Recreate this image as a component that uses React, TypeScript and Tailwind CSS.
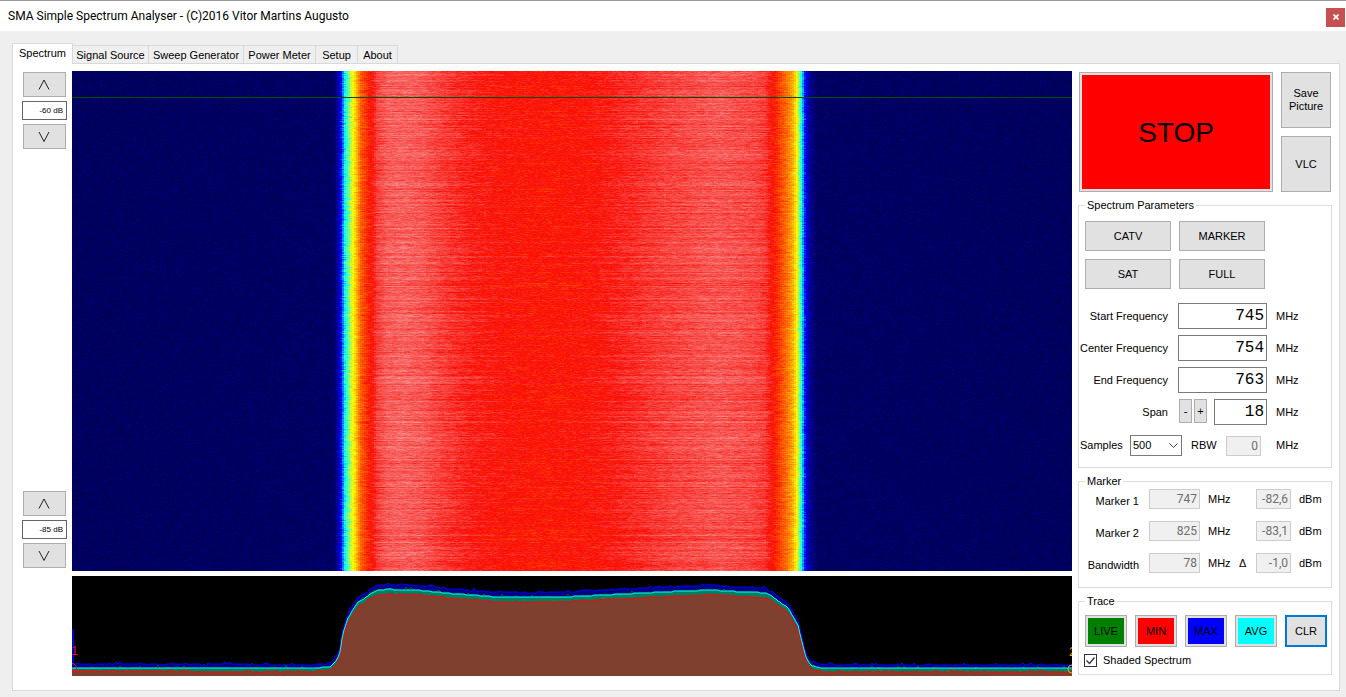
import { useLayoutEffect, useRef, type ReactNode } from 'react';

const BINS = 500;
const ROWS = 500;

type Point = [number, number];

function createRandom(seed: number) {
  let s = seed;
  return () => {
    s = (s + 0x6d2b79f5) | 0;
    let t = Math.imul(s ^ (s >>> 15), 1 | s);
    t = (t + Math.imul(t ^ (t >>> 7), 61 | t)) ^ t;
    return ((t ^ (t >>> 14)) >>> 0) / 4294967296;
  };
}

function interpolate(points: Point[], x: number) {
  for (let i = 1; i < points.length; i++) {
    if (x <= points[i][0]) {
      const [x0, y0] = points[i - 1];
      const [x1, y1] = points[i];
      return y0 + ((y1 - y0) * (x - x0)) / (x1 - x0);
    }
  }
  return points[points.length - 1][1];
}

// Signal level across the span; each whole level is one palette stop.
const LEVELS: Point[] = [
  [0, 0.5], [261, 0.55], [265, 1.2], [268, 2], [272, 3], [276, 3.5], [280, 4], [284, 4.6],
  [288, 5.3], [294, 5.7], [299, 6], [304, 6.5], [314, 6.8], [330, 6.85], [350, 6.75], [372, 6.45], [400, 6.18],
  [430, 6.03], [480, 5.95], [520, 6.04], [550, 6.25], [590, 6.5], [645, 6.75], [680, 6.6], [692, 6.45], [699, 6],
  [706, 5.6], [714, 5.1], [720, 4.6], [724, 4], [728, 3.2], [732, 2.1], [736, 1.2], [743, 0.55], [1000, 0.5],
];

const PALETTE = [
  [0, 0, 50], [0, 0, 140], [0, 0, 255], [0, 255, 255], [255, 255, 0],
  [255, 125, 0], [250, 14, 6], [246, 112, 110], [255, 210, 210],
];

function levelColor(level: number) {
  const l = Math.max(0, Math.min(PALETTE.length - 1.001, level));
  const i = Math.floor(l);
  const f = l - i;
  return PALETTE[i].map((c, k) => c + (PALETTE[i + 1][k] - c) * f);
}

function Waterfall() {
  const ref = useRef<HTMLCanvasElement>(null);
  useLayoutEffect(() => {
    const ctx = ref.current?.getContext('2d');
    if (!ctx) return;
    const random = createRandom(7);
    const image = ctx.createImageData(BINS, ROWS);
    const base = Array.from({ length: BINS }, (_, i) => interpolate(LEVELS, i * 2));
    let drift = 0;
    for (let y = 0; y < ROWS; y++) {
      drift = drift * 0.6 + (random() - 0.5) * 0.14;
      const rowShift = drift + (random() + random() - 1) * 0.26;
      let smear = 0;
      for (let x = 0; x < BINS; x++) {
        const signal = base[x] > 5.4 ? Math.max(0.4, Math.min(1, (base[x] - 5.5) * 1.6)) : base[x] > 1 ? 0.3 : 0;
        const grain = random() + random() - 1;
        smear = smear * 0.45 + grain * 0.3;
        const noise = signal ? smear * 0.9 : grain * 0.26;
        const [r, g, b] = levelColor(base[x] + noise + rowShift * signal);
        const o = (y * BINS + x) * 4;
        image.data[o] = r;
        image.data[o + 1] = g;
        image.data[o + 2] = b;
        image.data[o + 3] = 255;
      }
    }
    ctx.putImageData(image, 0, 0);
    ctx.fillStyle = '#005000';
    ctx.fillRect(0, 26, BINS, 1);
  }, []);
  return (
    <canvas
      ref={ref}
      width={BINS}
      height={ROWS}
      aria-label="Waterfall"
      className="block h-[500px] w-full [image-rendering:pixelated]"
    />
  );
}

const AVERAGE: Point[] = [
  [0, 91.5], [241, 92.3], [258, 90.7], [265, 84], [268, 75.7], [271, 57], [276, 42], [286, 25.7],
  [291, 24], [298, 18], [305, 14], [315, 13.3], [348, 14.3], [380, 17.5], [420, 20.5], [455, 21.5],
  [500, 20.5], [550, 18], [600, 15.5], [640, 14], [658, 15.3], [693, 16.7], [701, 21], [710, 28],
  [716, 31.7], [726, 49], [731, 70.7], [735, 84], [740, 90], [751, 92.3], [1000, 92.3],
];

function trace(seed: number, floorOffset: number, topOffset: number, jitter: number) {
  const random = createRandom(seed);
  const points: Point[] = [];
  for (let x = 0; x <= 1000; x += 2) {
    const y = interpolate(AVERAGE, x);
    const top = Math.max(0, Math.min(1, (92 - y) / 70));
    const offset = floorOffset + (topOffset - floorOffset) * top;
    const spike = random() > 0.7 ? (random() - 0.6) * jitter * 2 : 0;
    points.push([x, Math.round(y + offset + spike)]);
  }
  return points;
}

const toLine = (points: Point[]) => 'M' + points.map(([x, y]) => `${x} ${y}`).join('L');
const toArea = (points: Point[]) => toLine(points) + 'L1000 100L0 100Z';

const maxTrace = trace(3, -3.6, -4.8, 1.8);
const liveTrace = trace(11, 0.3, 0.3, 2.6);
const avgTrace = trace(5, 0, 0, 0);
const minTrace = trace(9, 3.6, 5, 1.3);

function SpectrumPlot() {
  return (
    <svg
      viewBox="0 0 1000 100"
      preserveAspectRatio="none"
      className="block h-[100px] w-full bg-black"
      role="img"
      aria-label="Spectrum"
    >
      <path d={toArea(maxTrace)} fill="#000080" />
      <path d={toLine(maxTrace)} fill="none" stroke="#0000ff" />
      <path d={toLine(liveTrace)} fill="none" stroke="#006400" />
      <path d={toArea(avgTrace)} fill="#008060" />
      <path d={toArea(minTrace)} fill="#804030" />
      <path d={toLine(minTrace)} fill="none" stroke="#ff0000" />
      <path d={toLine(avgTrace)} fill="none" stroke="#00ffff" />
      <path d="M1 53V90" stroke="#0000d0" strokeWidth="2" />
      <text x="-1" y="79" fill="#dc143c" fontSize="13" fontFamily="Liberation Sans, sans-serif">1</text>
      <circle cx="0" cy="92" r="4.5" fill="none" stroke="#dc143c" />
      <text x="997" y="80" fill="#ffa500" fontSize="13" fontFamily="Liberation Sans, sans-serif">2</text>
      <circle cx="1000" cy="93" r="4" fill="none" stroke="#ffa500" />
    </svg>
  );
}

const face = 'border border-[#adadad] bg-[#e1e1e1] text-center';

function Button({ className, children }: { className: string; children: ReactNode }) {
  return <button type="button" className={`${face} ${className}`}>{children}</button>;
}

function LevelControl({ name, value }: { name: string; value: string }) {
  return (
    <div className="flex flex-col items-center gap-1">
      <button type="button" aria-label={`${name} up`} className={`${face} flex h-[25px] w-[43px] items-center justify-center`}>
        <svg width="13" height="12" viewBox="0 0 13 12" fill="none" stroke="#222"><path d="M1 10.500 6 1l5 9.500" /></svg>
      </button>
      <input aria-label={name} defaultValue={value} className="h-[19px] w-[45px] border border-[#646464] bg-white px-[3px] text-right text-[8px]" />
      <button type="button" aria-label={`${name} down`} className={`${face} flex h-[25px] w-[43px] items-center justify-center`}>
        <svg width="13" height="12" viewBox="0 0 13 12" fill="none" stroke="#222"><path d="M1 1 6 10.500l5-9.500" /></svg>
      </button>
    </div>
  );
}

function FrequencyRow({ id, label, value }: { id: string; label: string; value: string }) {
  return (
    <div className="flex h-[26px] items-center">
      <label htmlFor={id} className="w-[89px] whitespace-nowrap text-right">{label}</label>
      <input id={id} defaultValue={value} className="ml-[10px] h-[26px] w-[89px] border border-[#7a7a7a] px-[2px] text-right font-['Liberation_Mono',monospace] text-[16px]" />
      <span className="ml-[9px]">MHz</span>
    </div>
  );
}

const disabledBox = 'h-5 border border-[#cccccc] bg-[#f0f0f0] px-[2px] text-right font-[Roboto,sans-serif] text-[12px] text-[#6d6d6d]';

function MarkerRow({ id, label, frequency, level, delta }: { id: string; label: string; frequency: string; level: string; delta?: boolean }) {
  return (
    <div className="flex h-5 items-center">
      <label htmlFor={id} className="w-[60px] pt-1 text-right">{label}</label>
      <input id={id} disabled defaultValue={frequency} className={`${disabledBox} ml-[10px] w-[51px]`} />
      <span className="ml-2 w-[31px]">MHz</span>
      <span className="w-[17px]">{delta ? 'Δ' : ''}</span>
      <input aria-label={`${label} level`} disabled defaultValue={level} className={`${disabledBox} w-[35px]`} />
      <span className="ml-2">dBm</span>
    </div>
  );
}

function Group({ title, className, children }: { title: string; className: string; children: ReactNode }) {
  return (
    <fieldset className={`border border-[#dcdcdc] ${className}`}>
      <legend className="ml-[6px] px-[2px] leading-[15px]">{title}</legend>
      {children}
    </fieldset>
  );
}

const TABS = [
  { label: 'Signal Source', width: 'w-[76px]' },
  { label: 'Sweep Generator', width: 'w-[95px]' },
  { label: 'Power Meter', width: 'w-[72px]' },
  { label: 'Setup', width: 'w-[42px]' },
  { label: 'About', width: 'w-[40px]' },
];

const TRACES = [
  { label: 'LIVE', color: 'bg-[#008000]' },
  { label: 'MIN', color: 'bg-[#ff0000]' },
  { label: 'MAX', color: 'bg-[#0000ff]' },
  { label: 'AVG', color: 'bg-[#00ffff]' },
];

export default function App() {
  return (
    <div className="min-h-screen bg-[#efefef] font-['Liberation_Sans',Arial,sans-serif] text-[11px] leading-[15px] text-black">
      <header className="flex h-[31px] items-center justify-between border-t border-[#999999] bg-white pl-2 pr-px pt-px">
        <h1 className="font-[Roboto,sans-serif] text-[12px]">SMA Simple Spectrum Analyser - (C)2016 Vitor Martins Augusto</h1>
        <button type="button" aria-label="Close" className="mt-px flex h-[19px] w-[19px] items-center justify-center bg-[#c75050]">
          <svg width="6" height="6" viewBox="0 0 6 6" stroke="#fff" strokeWidth="1.700"><path d="M.5.5l5 5M5.500.5l-5 5" /></svg>
        </button>
      </header>

      <div className="pb-[6px] pl-3 pr-[6px] pt-3">
        <nav role="tablist" className="flex items-end">
          <button type="button" role="tab" aria-selected="true" className="z-10 -mb-px h-[21px] w-[61px] border border-b-0 border-[#d9d9d9] bg-white pb-[2px]">
            Spectrum
          </button>
          {TABS.map((tab) => (
            <button key={tab.label} type="button" role="tab" aria-selected="false" className={`h-[18px] whitespace-nowrap border-r border-t border-[#d9d9d9] pt-px ${tab.width}`}>
              {tab.label}
            </button>
          ))}
        </nav>

        <main className="flex border border-[#d9d9d9] bg-white pb-[14px] pl-[9px] pr-[7px] pt-[7px]">
          <aside className="flex h-[500px] flex-col justify-between pb-[3px] pt-px">
            <LevelControl name="Top level" value="-60 dB" />
            <LevelControl name="Bottom level" value="-85 dB" />
          </aside>

          <section className="ml-[5px] flex min-w-0 flex-1 flex-col gap-[5px]">
            <Waterfall />
            <SpectrumPlot />
          </section>

          <section className="ml-[6px] flex w-[254px] flex-col gap-[6px] pt-px">
            <div className="flex gap-2 pl-px">
              <button type="button" className="h-[120px] w-[194px] border border-[#adadad] bg-[#e1e1e1] p-[2px]">
                <span className="flex h-full items-center justify-center bg-[#ff0000] text-[28px]">STOP</span>
              </button>
              <div className="flex flex-col gap-2">
                <Button className="h-14 w-[50px] leading-[13px]">Save Picture</Button>
                <Button className="h-14 w-[50px]">VLC</Button>
              </div>
            </div>

            <Group title="Spectrum Parameters" className="pb-[11px]">
              <div className="grid grid-cols-[86px_86px] gap-2 pl-[6px] pt-2">
                <Button className="h-[30px]">CATV</Button>
                <Button className="h-[30px]">MARKER</Button>
                <Button className="h-[30px]">SAT</Button>
                <Button className="h-[30px]">FULL</Button>
              </div>
              <div className="mt-[14px] flex flex-col gap-[6px]">
                <FrequencyRow id="start" label="Start Frequency" value="745" />
                <FrequencyRow id="center" label="Center Frequency" value="754" />
                <FrequencyRow id="end" label="End Frequency" value="763" />
                <div className="flex h-[26px] items-center">
                  <label htmlFor="span" className="w-[89px] text-right">Span</label>
                  <div className="ml-[11px] flex gap-[2px] self-start">
                    <Button className="h-6 w-[13px]">-</Button>
                    <Button className="h-6 w-[13px]">+</Button>
                  </div>
                  <input id="span" defaultValue="18" className="ml-[7px] h-[26px] w-[53px] border border-[#7a7a7a] px-[2px] text-right font-['Liberation_Mono',monospace] text-[16px]" />
                  <span className="ml-[9px]">MHz</span>
                </div>
              </div>
              <div className="mt-[10px] flex h-[21px] items-center">
                <label htmlFor="samples" className="w-[51px] pl-px">Samples</label>
                <div className="relative">
                  <select id="samples" defaultValue="500" className="block h-[21px] w-[52px] appearance-none border border-[#7a7a7a] bg-white pl-[2px]">
                    <option>500</option>
                  </select>
                  <svg className="pointer-events-none absolute right-1 top-2" width="9" height="6" viewBox="0 0 9 6" fill="none" stroke="#444"><path d="M.5.5l4 4 4-4" /></svg>
                </div>
                <label htmlFor="rbw" className="ml-[9px] w-[35px]">RBW</label>
                <input id="rbw" disabled defaultValue="0" className={`${disabledBox} w-[35px]`} />
                <span className="ml-[15px]">MHz</span>
              </div>
            </Group>

            <Group title="Marker" className="pb-[14px]">
              <div className="flex flex-col gap-3">
                <MarkerRow id="marker1" label="Marker 1" frequency="747" level="-82,6" />
                <MarkerRow id="marker2" label="Marker 2" frequency="825" level="-83,1" />
                <MarkerRow id="bandwidth" label="Bandwidth" frequency="78" level="-1,0" delta />
              </div>
            </Group>

            <Group title="Trace" className="pb-[6px]">
              <div className="flex gap-2 pl-[6px] pt-[6px]">
                {TRACES.map((t) => (
                  <button key={t.label} type="button" className="h-8 w-[42px] border border-[#adadad] bg-[#e1e1e1] p-[2px]">
                    <span className={`flex h-full items-center justify-center ${t.color}`}>{t.label}</span>
                  </button>
                ))}
                <button type="button" className="h-8 w-[42px] border-2 border-[#0078d7] bg-[#e1e1e1]">CLR</button>
              </div>
              <label className="mt-[6px] flex items-center gap-[6px] pl-[5px]">
                <span className="relative flex h-[13px] w-[13px]">
                  <input type="checkbox" defaultChecked className="peer h-[13px] w-[13px] appearance-none border border-[#333333] bg-white" />
                  <svg className="pointer-events-none absolute inset-0 hidden peer-checked:block" width="13" height="13" viewBox="0 0 13 13" fill="none" stroke="#333" strokeWidth="1.300"><path d="M2.500 6.500l3 3 5-6" /></svg>
                </span>
                Shaded Spectrum
              </label>
            </Group>
          </section>
        </main>
      </div>
    </div>
  );
}
